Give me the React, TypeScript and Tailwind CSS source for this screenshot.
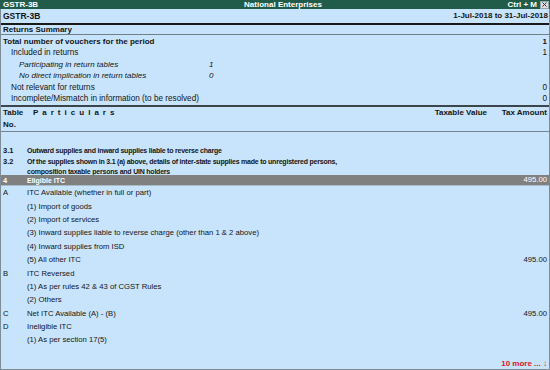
import React from "react";

type Row = { c: string; t: string; v?: string };

const rows: Row[] = [
  { c: "A", t: "ITC Available (whether in full or part)" },
  { c: "", t: "(1) Import of goods" },
  { c: "", t: "(2) Import of services" },
  { c: "", t: "(3) Inward supplies liable to reverse charge (other than 1 & 2 above)" },
  { c: "", t: "(4) Inward supplies from ISD" },
  { c: "", t: "(5) All other ITC", v: "495.00" },
  { c: "B", t: "ITC Reversed" },
  { c: "", t: "(1) As per rules 42 & 43 of CGST Rules" },
  { c: "", t: "(2) Others" },
  { c: "C", t: "Net ITC Available (A) - (B)", v: "495.00" },
  { c: "D", t: "Ineligible ITC" },
  { c: "", t: "(1) As per section 17(5)" },
];

export default function App() {
  return (
    <div className="w-[550px] h-[370px] overflow-hidden flex flex-col bg-[#c8e4fc] font-['Liberation_Sans',Arial,sans-serif] text-[#141414]">
      {/* Title bar */}
      <div className="h-[9px] shrink-0 bg-[#215b4a] text-white font-bold text-[8px] leading-none grid grid-cols-[1fr_auto_1fr] items-center pl-[3px] pr-[1px]">
        <span>GSTR-3B</span>
        <span className="pl-[14px]">National Enterprises</span>
        <span className="flex items-center justify-end gap-[3px]">
          <span>Ctrl + M</span>
          <span className="w-[9px] h-[8px] bg-[#d8dde0] border border-[#9aa5ab] flex items-center justify-center">
            <svg width="5" height="5" viewBox="0 0 5 5">
              <path d="M0.5 0.5 L4.5 4.5 M4.5 0.5 L0.5 4.5" stroke="#333" strokeWidth="1" />
            </svg>
          </span>
        </span>
      </div>

      {/* Body */}
      <div className="flex-1 flex flex-col border-x border-b border-[#7d8d98] min-h-0">
        <div className="h-[14px] shrink-0 flex items-center justify-between pl-[2px] pr-[1px] font-bold text-[8px] leading-none">
          <span className="text-[8.5px]">GSTR-3B</span>
          <span>1-Jul-2018 to 31-Jul-2018</span>
        </div>
        <div className="h-[2px] shrink-0 bg-[#1a1a1a]" />
        <div className="h-[9px] shrink-0 flex items-center pl-[2px] font-bold text-[8px] leading-none">
          Returns Summary
        </div>
        <div className="h-px shrink-0 bg-[#6f808b]" />

        {/* Summary */}
        <div className="pt-[1.5px] pb-[0.5px] pl-[2px] pr-[2px] text-[8.2px] leading-none">
          <div className="h-[11.4px] flex items-center justify-between font-bold text-[8px]">
            <span>Total number of vouchers for the period</span>
            <span>1</span>
          </div>
          <div className="h-[11.4px] flex items-center justify-between pl-[8px]">
            <span>Included in returns</span>
            <span>1</span>
          </div>
          <div className="h-[11.4px] flex items-center italic text-[8px]">
            <span className="w-[206px] pl-[16px]">Participating in return tables</span>
            <span>1</span>
          </div>
          <div className="h-[11.4px] flex items-center italic text-[8px]">
            <span className="w-[206px] pl-[16px]">No direct implication in return tables</span>
            <span>0</span>
          </div>
          <div className="h-[11.4px] flex items-center justify-between pl-[8px]">
            <span>Not relevant for returns</span>
            <span>0</span>
          </div>
          <div className="h-[11.4px] flex items-center justify-between pl-[8px]">
            <span>Incomplete/Mismatch in information (to be resolved)</span>
            <span>0</span>
          </div>
        </div>
        <div className="h-[2px] shrink-0 bg-[#3c454b]" />

        {/* Table header */}
        <div className="h-[24px] shrink-0 grid grid-cols-[24px_1fr_80px_60px] pl-[2px] pr-[2px] font-bold text-[8px] leading-[12px]">
          <div>
            <div>Table</div>
            <div>No.</div>
          </div>
          <div className="pl-[6px] tracking-[0.9px]">P a r t i c u l a r s</div>
          <div className="text-right">Taxable Value</div>
          <div className="text-right">Tax Amount</div>
        </div>
        <div className="h-px shrink-0 bg-[#75858f]" />

        <div className="h-[12px] shrink-0" />
        <div className="h-[12px] shrink-0 grid grid-cols-[24px_1fr] items-center pl-[2px] font-bold text-[7px] tracking-[-0.22px] leading-none">
          <span className="text-[7.5px] tracking-normal">3.1</span>
          <span>Outward supplies and inward supplies liable to reverse charge</span>
        </div>
        <div className="h-[19px] shrink-0 pt-[1px] grid grid-cols-[24px_1fr] pl-[2px] font-bold text-[7px] tracking-[-0.22px] leading-[9.3px]">
          <span className="text-[7.5px] tracking-normal">3.2</span>
          <span>
            Of the supplies shown in 3.1 (a) above, details of inter-state supplies made to unregistered persons,
            <br />
            composition taxable persons and UIN holders
          </span>
        </div>
        <div className="h-[10px] shrink-0 bg-[#808080] text-white grid grid-cols-[24px_1fr_80px_60px] items-center pl-[2px] pr-[2px] leading-none">
          <span className="font-bold text-[7.5px]">4</span>
          <span className="font-bold text-[7px]">Eligible ITC</span>
          <span />
          <span className="text-right text-[7.7px]">495.00</span>
        </div>
        <div className="h-px shrink-0 bg-[#a9bccb]" />

        {rows.map((r, i) => (
          <div
            key={i}
            className="h-[13.4px] shrink-0 grid grid-cols-[24px_1fr_80px_60px] items-center pl-[2px] pr-[2px] text-[7.7px] leading-none"
          >
            <span>{r.c}</span>
            <span>{r.t}</span>
            <span />
            <span className="text-right">{r.v ?? ""}</span>
          </div>
        ))}

        <div className="mt-auto h-[10px] shrink-0 flex items-center justify-end pr-[2px] text-[#e0141b] font-bold text-[8px] leading-none">
          10 more ... ↓
        </div>
      </div>
    </div>
  );
}
